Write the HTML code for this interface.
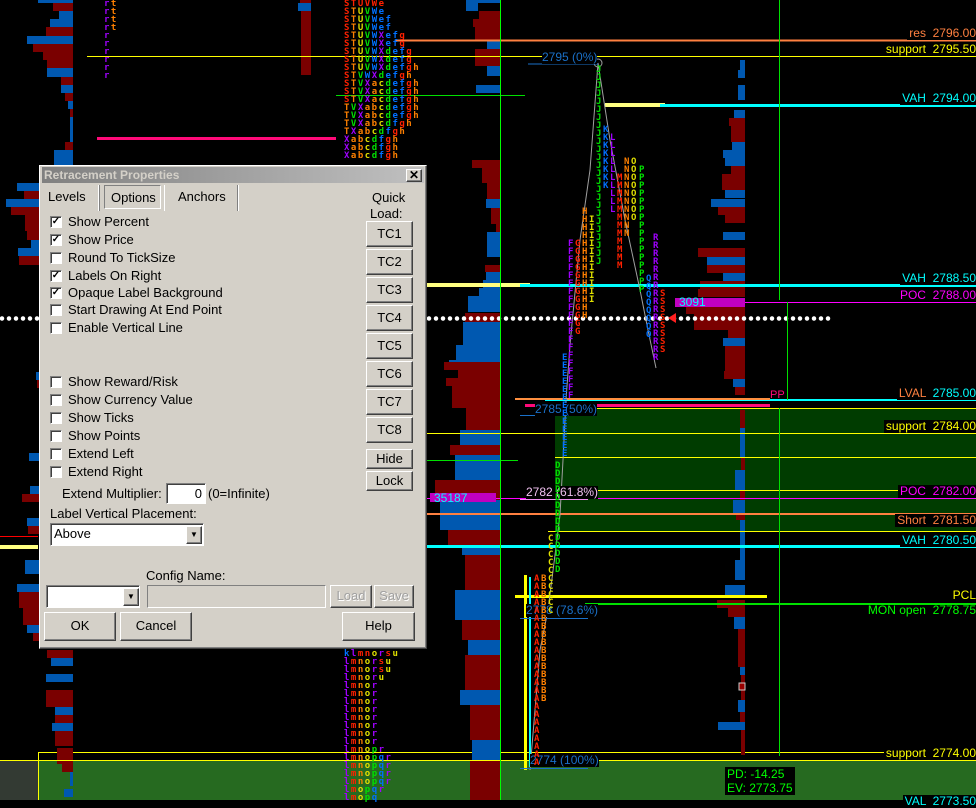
<!DOCTYPE html>
<html><head><meta charset="utf-8"><style>
*{margin:0;padding:0;box-sizing:border-box}
body{width:976px;height:800px;background:#000;position:relative;overflow:hidden;font-family:"Liberation Sans",sans-serif}
.a{position:absolute}
.lbl{position:absolute;right:0;font:12px "Liberation Sans",sans-serif;white-space:pre;line-height:13px;background:#000;padding-left:2px}
.col{position:absolute;width:7px;word-break:break-all;font:bold 9px "DejaVu Sans Mono",monospace;line-height:8px}
.tp{position:absolute;font:bold 9px "DejaVu Sans Mono",monospace;line-height:8px;white-space:pre;letter-spacing:1.5px}
.fib{position:absolute;font:12px "Liberation Sans",sans-serif;color:#1a70c8;background:#000;line-height:13px;white-space:pre}
#dlg{position:absolute;left:39px;top:165px;width:388px;height:484px;background:#d4d0c8;border:1px solid #fff;border-right-color:#404040;border-bottom-color:#404040;box-shadow:inset -1px -1px #808080;font-size:13px;color:#000}
#dlg .t{position:absolute;white-space:nowrap;line-height:15px}
.cb{position:absolute;left:10px;width:12px;height:12px;background:#fff;border:1px solid #808080;border-right-color:#fff;border-bottom-color:#fff;box-shadow:inset 1px 1px #404040;font-size:10px;line-height:10px;text-align:center;font-weight:bold}
.btn{position:absolute;background:#d4d0c8;border:1px solid #fff;border-right-color:#404040;border-bottom-color:#404040;box-shadow:inset -1px -1px #808080;text-align:center;font-size:13px}
.fld{position:absolute;background:#fff;border:1px solid #808080;border-right-color:#fff;border-bottom-color:#fff;box-shadow:inset 1px 1px #404040}
</style></head><body>

<div class="a" style="left:555px;top:408px;width:421px;height:123px;background:#003c00"></div>
<div class="a" style="left:38px;top:760px;width:938px;height:40px;background:#266a20"></div>
<div class="a" style="left:0;top:760px;width:38px;height:40px;background:#333a33"></div>
<div class="a" style="left:38px;top:752px;width:938px;height:48px;border:1px solid #ff0;border-right:none;border-bottom:none"></div>

<svg class="a" style="left:0;top:0" width="976" height="800">
<g fill="#0058b0">
<rect x="38" y="0" width="35" height="3"/><rect x="59" y="11" width="14" height="8"/><rect x="50" y="19" width="23" height="8"/><rect x="27" y="36" width="46" height="8"/><rect x="47" y="68" width="26" height="9"/><rect x="61" y="85" width="12" height="8"/><rect x="68" y="101" width="5" height="8"/><rect x="70" y="117" width="3" height="25"/><rect x="54" y="150" width="19" height="15"/>
<rect x="17" y="183" width="22" height="8"/><rect x="6" y="199" width="33" height="8"/><rect x="31" y="240" width="8" height="8"/><rect x="18" y="248" width="21" height="8"/><rect x="36" y="372" width="3" height="8"/><rect x="29" y="453" width="10" height="8"/><rect x="30" y="486" width="9" height="8"/><rect x="27" y="518" width="12" height="8"/><rect x="25" y="560" width="14" height="14"/><rect x="17" y="584" width="22" height="8"/><rect x="27" y="625" width="12" height="8"/>
<rect x="51" y="658" width="22" height="8"/><rect x="46" y="674" width="27" height="8"/><rect x="55" y="707" width="18" height="8"/><rect x="52" y="723" width="21" height="8"/><rect x="70" y="772" width="3" height="14"/><rect x="64" y="789" width="9" height="8"/>
<rect x="466" y="0" width="34" height="3"/><rect x="466" y="3" width="12" height="8"/><rect x="487" y="41" width="13" height="8"/><rect x="487" y="66" width="13" height="10"/><rect x="476" y="85" width="24" height="8"/><rect x="486" y="199" width="14" height="9"/><rect x="487" y="232" width="13" height="25"/><rect x="486" y="272" width="14" height="8"/><rect x="483" y="280" width="17" height="9"/><rect x="479" y="288" width="21" height="8"/><rect x="468" y="296" width="32" height="8"/><rect x="468" y="304" width="32" height="8"/><rect x="463" y="322" width="37" height="30"/><rect x="456" y="345" width="44" height="15"/><rect x="449" y="360" width="51" height="10"/>
<rect x="460" y="430" width="40" height="15"/><rect x="455" y="455" width="45" height="25"/><rect x="440" y="500" width="60" height="30"/><rect x="462" y="545" width="38" height="10"/><rect x="455" y="590" width="45" height="30"/><rect x="468" y="640" width="32" height="15"/><rect x="460" y="690" width="40" height="15"/><rect x="472" y="740" width="28" height="20"/>
<rect x="740" y="60" width="5" height="10"/><rect x="738" y="70" width="7" height="8"/><rect x="738" y="85" width="7" height="15"/><rect x="734" y="110" width="11" height="8"/><rect x="732" y="142" width="13" height="8"/><rect x="723" y="150" width="22" height="8"/><rect x="725" y="158" width="20" height="8"/><rect x="725" y="190" width="20" height="8"/><rect x="711" y="199" width="34" height="8"/><rect x="723" y="232" width="22" height="8"/><rect x="707" y="257" width="38" height="8"/><rect x="723" y="273" width="22" height="8"/><rect x="723" y="338" width="22" height="8"/><rect x="733" y="379" width="12" height="8"/><rect x="740" y="428" width="5" height="30"/><rect x="735" y="470" width="10" height="20"/><rect x="733" y="500" width="12" height="15"/><rect x="740" y="520" width="5" height="40"/><rect x="735" y="560" width="10" height="20"/><rect x="725" y="585" width="20" height="12"/><rect x="734" y="617" width="11" height="12"/><rect x="740" y="667" width="5" height="8"/><rect x="738" y="700" width="7" height="12"/><rect x="718" y="722" width="27" height="8"/>
</g>
<g fill="#7a0000">
<rect x="53" y="3" width="20" height="8"/><rect x="46" y="27" width="27" height="9"/><rect x="33" y="44" width="40" height="8"/><rect x="43" y="52" width="30" height="8"/><rect x="47" y="60" width="26" height="8"/><rect x="61" y="77" width="12" height="8"/><rect x="65" y="93" width="8" height="8"/><rect x="70" y="109" width="3" height="8"/><rect x="65" y="142" width="8" height="8"/>
<rect x="24" y="191" width="15" height="8"/><rect x="11" y="207" width="28" height="8"/><rect x="25" y="215" width="14" height="16"/><rect x="27" y="231" width="12" height="9"/><rect x="19" y="256" width="20" height="9"/><rect x="37" y="380" width="2" height="8"/><rect x="22" y="494" width="17" height="8"/><rect x="28" y="526" width="11" height="8"/><rect x="19" y="592" width="20" height="16"/><rect x="23" y="608" width="16" height="17"/><rect x="33" y="633" width="6" height="8"/>
<rect x="47" y="650" width="26" height="8"/><rect x="46" y="690" width="27" height="17"/><rect x="55" y="715" width="18" height="8"/><rect x="55" y="731" width="18" height="15"/><rect x="57" y="748" width="16" height="16"/><rect x="62" y="764" width="11" height="8"/>
<rect x="479" y="11" width="21" height="8"/><rect x="473" y="19" width="27" height="8"/><rect x="475" y="27" width="25" height="14"/><rect x="475" y="49" width="25" height="17"/><rect x="472" y="160" width="28" height="8"/><rect x="482" y="168" width="18" height="15"/><rect x="487" y="183" width="13" height="16"/><rect x="491" y="208" width="9" height="16"/><rect x="496" y="224" width="4" height="8"/><rect x="485" y="265" width="15" height="7"/><rect x="465" y="313" width="35" height="9"/><rect x="444" y="362" width="56" height="8"/><rect x="458" y="370" width="42" height="8"/><rect x="446" y="378" width="54" height="8"/><rect x="452" y="386" width="48" height="22"/><rect x="466" y="408" width="34" height="22"/><rect x="450" y="445" width="50" height="10"/><rect x="435" y="480" width="65" height="20"/><rect x="448" y="530" width="52" height="15"/><rect x="465" y="555" width="35" height="35"/><rect x="462" y="620" width="38" height="20"/><rect x="465" y="655" width="35" height="35"/><rect x="470" y="705" width="30" height="35"/><rect x="470" y="760" width="30" height="40"/>
<rect x="729" y="118" width="16" height="8"/><rect x="731" y="126" width="14" height="16"/><rect x="731" y="166" width="14" height="8"/><rect x="722" y="174" width="23" height="16"/><rect x="718" y="207" width="27" height="8"/><rect x="725" y="215" width="20" height="8"/><rect x="698" y="248" width="47" height="9"/><rect x="707" y="265" width="38" height="8"/><rect x="700" y="281" width="45" height="8"/><rect x="698" y="289" width="47" height="8"/><rect x="686" y="306" width="59" height="8"/><rect x="694" y="314" width="51" height="16"/><rect x="728" y="330" width="17" height="8"/><rect x="725" y="346" width="20" height="25"/><rect x="724" y="371" width="21" height="8"/><rect x="735" y="387" width="10" height="8"/><rect x="740" y="410" width="5" height="18"/><rect x="741" y="458" width="4" height="12"/><rect x="740" y="490" width="5" height="10"/><rect x="736" y="515" width="9" height="5"/><rect x="717" y="600" width="28" height="8"/><rect x="728" y="608" width="17" height="9"/><rect x="738" y="629" width="7" height="38"/><rect x="741" y="675" width="4" height="25"/><rect x="740" y="712" width="5" height="10"/><rect x="741" y="730" width="4" height="25"/>
</g>
<rect x="300" y="0" width="11" height="5" fill="#7a0000"/><rect x="298" y="3" width="13" height="8" fill="#0058b0"/><rect x="301" y="11" width="10" height="64" fill="#7a0000"/>
<rect x="97" y="137" width="239" height="3" fill="#ff0a78"/>
<line x1="395" y1="40.5" x2="976" y2="40.5" stroke="#ff8040" stroke-width="2"/>
<line x1="87" y1="56.5" x2="976" y2="56.5" stroke="#ffff00"/>
<line x1="336" y1="95.5" x2="525" y2="95.5" stroke="#00e000"/>
<rect x="605" y="103" width="60" height="4" fill="#ffff80"/><rect x="660" y="104" width="316" height="3" fill="#00ffff"/>
<rect x="426" y="283" width="104" height="4" fill="#ffff80"/><rect x="520" y="284" width="456" height="3" fill="#00ffff"/>
<line x1="675" y1="302.5" x2="976" y2="302.5" stroke="#ff00ff"/>
<rect x="675" y="298" width="70" height="9" fill="#c000c0"/>
<line x1="2" y1="318.5" x2="832" y2="318.5" stroke="#fff" stroke-width="4.5" stroke-dasharray="0,7" stroke-linecap="round"/>
<polygon points="668,318 676,313 676,323" fill="#ff2020"/>
<rect x="545" y="399" width="431" height="2" fill="#00ffff"/>
<rect x="515" y="398" width="255" height="2" fill="#ff9040"/>
<rect x="525" y="404" width="245" height="3" fill="#ff0a78"/>
<line x1="555" y1="408.5" x2="976" y2="408.5" stroke="#ffff00"/>
<line x1="426" y1="433.5" x2="976" y2="433.5" stroke="#ffff00"/>
<line x1="426" y1="460.5" x2="518" y2="460.5" stroke="#00e000"/>
<line x1="555" y1="457.5" x2="976" y2="457.5" stroke="#ffff00"/>
<line x1="555" y1="490.5" x2="976" y2="490.5" stroke="#ffff00"/>
<line x1="426" y1="498.5" x2="976" y2="498.5" stroke="#ff00ff"/>
<rect x="430" y="493" width="66" height="9" fill="#c000c0"/>
<rect x="426" y="513" width="550" height="2" fill="#ff8040"/>
<line x1="548" y1="531.5" x2="976" y2="531.5" stroke="#ffff00"/>
<rect x="0" y="536" width="38" height="1" fill="#ff0000"/>
<rect x="0" y="545" width="38" height="4" fill="#ffff80"/>
<rect x="426" y="545" width="550" height="3" fill="#00ffff"/>
<rect x="515" y="595" width="252" height="3" fill="#ffff00"/>
<rect x="585" y="603" width="391" height="2" fill="#00e000"/>
<line x1="0" y1="760.5" x2="976" y2="760.5" stroke="#ffff00"/>
<line x1="500.5" y1="0" x2="500.5" y2="800" stroke="#00ff00"/>
<line x1="779.5" y1="0" x2="779.5" y2="300" stroke="#00e000"/>
<line x1="779.5" y1="408" x2="779.5" y2="756" stroke="#00e000"/>
<line x1="787.5" y1="302" x2="787.5" y2="400" stroke="#00e000"/>
<rect x="524" y="575" width="3" height="195" fill="#ffff00"/><rect x="529" y="577" width="2" height="190" fill="#00ffff"/>
<polyline points="530,770 540,650 548,610 555,555 560,515 563,460 566,400 570,345 580,240 590,170 598,63 610,140 625,220 640,290 648,330 656,368" fill="none" stroke="#a0a0a0" stroke-width="1"/>
<circle cx="598" cy="63" r="4" fill="none" stroke="#a0a0a0"/>
<g stroke="#1a70c8" stroke-width="1">
<line x1="528" y1="64" x2="598" y2="64"/><line x1="520" y1="415.5" x2="588" y2="415.5"/><line x1="520" y1="768.5" x2="588" y2="768.5"/><line x1="520" y1="618.5" x2="588" y2="618.5"/>
</g><line x1="520" y1="499.5" x2="588" y2="499.5" stroke="#f090f0"/>
<rect x="739" y="683" width="6" height="7" fill="#900" stroke="#ccc"/>
</svg>

<div class="lbl" style="top:27px;color:#ff8040">res  2796.00</div>
<div class="lbl" style="top:43px;color:#ffff00">support  2795.50</div>
<div class="lbl" style="top:92px;color:#00ffff">VAH  2794.00</div>
<div class="lbl" style="top:272px;color:#00ffff">VAH  2788.50</div>
<div class="lbl" style="top:289px;color:#ff00ff">POC  2788.00</div>
<div class="lbl" style="top:387px;color:#00ffff"><span style="color:#ff8040">LVAL</span>  2785.00</div>
<div class="lbl" style="top:420px;color:#ffff00">support  2784.00</div>
<div class="lbl" style="top:485px;color:#ff00ff">POC  2782.00</div>
<div class="lbl" style="top:514px;color:#ff8040">Short  2781.50</div>
<div class="lbl" style="top:534px;color:#00ffff">VAH  2780.50</div>
<div class="lbl" style="top:589px;color:#ffff00;background:none">PCL</div>
<div class="lbl" style="top:604px;color:#00ff00;background:none">MON open  2778.75</div>
<div class="lbl" style="top:747px;color:#ffff00">support  2774.00</div>
<div class="lbl" style="top:795px;color:#00ffff">VAL  2773.50</div>
<div class="a" style="left:679px;top:296px;font:12px 'Liberation Sans',sans-serif;color:#00ffff;line-height:12px">3091</div>
<div class="a" style="left:434px;top:492px;font:12px 'Liberation Sans',sans-serif;color:#00ffff;line-height:12px">35187</div>
<div class="a" style="left:770px;top:390px;font:11px 'Liberation Sans',sans-serif;color:#ff0a78;line-height:11px">PP</div>
<div class="a" style="left:725px;top:767px;background:#000;font:12px 'Liberation Sans',sans-serif;color:#00ff00;line-height:14px;padding:0 2px">PD: -14.25<br>EV: 2773.75</div>

<div class="fib" style="left:542px;top:51px">2795 (0%)</div>
<div class="fib" style="left:535px;top:403px">2785 (50%)</div>
<div class="fib" style="left:526px;top:486px;color:#f0c0f0">2782 (61.8%)</div>
<div class="fib" style="left:526px;top:604px">2778 (78.6%)</div>
<div class="fib" style="left:530px;top:754px">2774 (100%)</div>

<div class="tp" style="left:104px;top:0"><span style="color:#a000ff">r</span><span style="color:#ff8000">t</span>
<span style="color:#a000ff">r</span><span style="color:#ff8000">t</span>
<span style="color:#a000ff">r</span><span style="color:#ff8000">t</span>
<span style="color:#a000ff">r</span><span style="color:#ff8000">t</span>
<span style="color:#a000ff">r
r
r
r
r
r</span></div>
<div class="tp" style="left:344px;top:0;color:#ff2000">STUVWe
S<b style="color:#ff8000">T</b><b style="color:#e0e000">U</b><b style="color:#00e000">V</b><b style="color:#0070ff">We</b>
S<b style="color:#ff8000">T</b><b style="color:#e0e000">U</b><b style="color:#00e000">V</b><b style="color:#0070ff">Wef</b>
S<b style="color:#ff8000">T</b><b style="color:#e0e000">U</b><b style="color:#00e000">V</b><b style="color:#0070ff">Wef</b>
S<b style="color:#ff8000">T</b><b style="color:#e0e000">U</b><b style="color:#00e000">V</b><b style="color:#0070ff">W</b><b style="color:#a000ff">X</b><b style="color:#0070ff">ef</b>g
S<b style="color:#ff8000">T</b><b style="color:#e0e000">U</b><b style="color:#00e000">V</b><b style="color:#0070ff">W</b><b style="color:#a000ff">X</b><b style="color:#0070ff">ef</b>g
S<b style="color:#ff8000">T</b><b style="color:#e0e000">U</b><b style="color:#00e000">V</b><b style="color:#0070ff">W</b><b style="color:#a000ff">X</b><b style="color:#00e000">d</b><b style="color:#0070ff">ef</b>g
S<b style="color:#ff8000">T</b><b style="color:#e0e000">U</b><b style="color:#00e000">V</b><b style="color:#0070ff">W</b><b style="color:#a000ff">X</b><b style="color:#00e000">d</b><b style="color:#0070ff">ef</b>g
S<b style="color:#ff8000">T</b><b style="color:#e0e000">U</b><b style="color:#00e000">V</b><b style="color:#0070ff">W</b><b style="color:#a000ff">X</b><b style="color:#00e000">d</b><b style="color:#0070ff">ef</b>g<b style="color:#ff8000">h</b>
S<b style="color:#ff8000">T</b><b style="color:#00e000">V</b><b style="color:#0070ff">W</b><b style="color:#a000ff">X</b><b style="color:#00e000">d</b><b style="color:#0070ff">ef</b>g<b style="color:#ff8000">h</b>
S<b style="color:#ff8000">T</b><b style="color:#00e000">V</b><b style="color:#a000ff">X</b><b style="color:#ff8000">a</b><b style="color:#e0e000">c</b><b style="color:#00e000">d</b><b style="color:#0070ff">ef</b>g<b style="color:#ff8000">h</b>
S<b style="color:#ff8000">T</b><b style="color:#00e000">V</b><b style="color:#a000ff">X</b><b style="color:#ff8000">a</b><b style="color:#e0e000">c</b><b style="color:#00e000">d</b><b style="color:#0070ff">ef</b>g<b style="color:#ff8000">h</b>
S<b style="color:#ff8000">T</b><b style="color:#00e000">V</b><b style="color:#a000ff">X</b><b style="color:#ff8000">a</b><b style="color:#e0e000">c</b><b style="color:#00e000">d</b><b style="color:#0070ff">ef</b>g<b style="color:#ff8000">h</b>
<b style="color:#ff8000">T</b><b style="color:#00e000">V</b><b style="color:#a000ff">X</b><b style="color:#ff8000">ab</b><b style="color:#e0e000">c</b><b style="color:#00e000">d</b><b style="color:#0070ff">ef</b>g<b style="color:#ff8000">h</b>
<b style="color:#ff8000">T</b><b style="color:#00e000">V</b><b style="color:#a000ff">X</b><b style="color:#ff8000">ab</b><b style="color:#e0e000">c</b><b style="color:#00e000">d</b><b style="color:#0070ff">ef</b>g<b style="color:#ff8000">h</b>
<b style="color:#ff8000">T</b><b style="color:#00e000">V</b><b style="color:#a000ff">X</b><b style="color:#ff8000">ab</b><b style="color:#e0e000">c</b><b style="color:#00e000">d</b><b style="color:#0070ff">f</b>g<b style="color:#ff8000">h</b>
<b style="color:#ff8000">T</b><b style="color:#a000ff">X</b><b style="color:#ff8000">ab</b><b style="color:#e0e000">c</b><b style="color:#00e000">d</b><b style="color:#0070ff">f</b>g<b style="color:#ff8000">h</b>
<b style="color:#a000ff">X</b><b style="color:#ff8000">ab</b><b style="color:#e0e000">c</b><b style="color:#00e000">d</b><b style="color:#0070ff">f</b>g<b style="color:#ff8000">h</b>
<b style="color:#a000ff">X</b><b style="color:#ff8000">ab</b><b style="color:#e0e000">c</b><b style="color:#00e000">d</b><b style="color:#0070ff">f</b>g<b style="color:#ff8000">h</b>
<b style="color:#a000ff">X</b><b style="color:#ff8000">ab</b><b style="color:#e0e000">c</b><b style="color:#00e000">d</b><b style="color:#0070ff">f</b>g<b style="color:#ff8000">h</b></div>
<div class="tp" style="left:344px;top:650px;color:#ff2000"><b style="color:#0070ff">k</b><b style="color:#a000ff">l</b>mn<b style="color:#e0e000">o</b><b style="color:#a000ff">r</b>s<b style="color:#e0e000">u</b>
<b style="color:#a000ff">l</b>m<b style="color:#ff8000">n</b><b style="color:#e0e000">o</b><b style="color:#a000ff">r</b>s<b style="color:#e0e000">u</b>
<b style="color:#a000ff">l</b>m<b style="color:#ff8000">n</b><b style="color:#e0e000">o</b><b style="color:#a000ff">r</b>s<b style="color:#e0e000">u</b>
<b style="color:#a000ff">l</b>m<b style="color:#ff8000">n</b><b style="color:#e0e000">o</b><b style="color:#a000ff">r</b><b style="color:#e0e000">u</b>
<b style="color:#a000ff">l</b>m<b style="color:#ff8000">n</b><b style="color:#e0e000">o</b><b style="color:#a000ff">r</b>
<b style="color:#a000ff">l</b>m<b style="color:#ff8000">n</b><b style="color:#e0e000">o</b><b style="color:#a000ff">r</b>
<b style="color:#a000ff">l</b>m<b style="color:#ff8000">n</b><b style="color:#e0e000">o</b><b style="color:#a000ff">r</b>
<b style="color:#a000ff">l</b>m<b style="color:#ff8000">n</b><b style="color:#e0e000">o</b><b style="color:#a000ff">r</b>
<b style="color:#a000ff">l</b>m<b style="color:#ff8000">n</b><b style="color:#e0e000">o</b><b style="color:#a000ff">r</b>
<b style="color:#a000ff">l</b>m<b style="color:#ff8000">n</b><b style="color:#e0e000">o</b><b style="color:#a000ff">r</b>
<b style="color:#a000ff">l</b>m<b style="color:#ff8000">n</b><b style="color:#e0e000">o</b><b style="color:#a000ff">r</b>
<b style="color:#a000ff">l</b>m<b style="color:#ff8000">n</b><b style="color:#e0e000">o</b><b style="color:#a000ff">r</b>
<b style="color:#a000ff">l</b>m<b style="color:#ff8000">n</b><b style="color:#e0e000">o</b><b style="color:#00e000">p</b><b style="color:#a000ff">r</b>
<b style="color:#a000ff">l</b>m<b style="color:#ff8000">n</b><b style="color:#e0e000">o</b><b style="color:#00e000">p</b><b style="color:#0070ff">q</b><b style="color:#a000ff">r</b>
<b style="color:#a000ff">l</b>m<b style="color:#ff8000">n</b><b style="color:#e0e000">o</b><b style="color:#00e000">p</b><b style="color:#0070ff">q</b><b style="color:#a000ff">r</b>
<b style="color:#a000ff">l</b>m<b style="color:#ff8000">n</b><b style="color:#e0e000">o</b><b style="color:#00e000">p</b><b style="color:#0070ff">q</b><b style="color:#a000ff">r</b>
<b style="color:#a000ff">l</b>m<b style="color:#ff8000">n</b><b style="color:#e0e000">o</b><b style="color:#00e000">p</b><b style="color:#0070ff">q</b><b style="color:#a000ff">r</b>
<b style="color:#a000ff">l</b>m<b style="color:#e0e000">o</b><b style="color:#00e000">p</b><b style="color:#0070ff">q</b><b style="color:#a000ff">r</b>
<b style="color:#a000ff">l</b>m<b style="color:#e0e000">o</b><b style="color:#00e000">p</b><b style="color:#0070ff">q</b></div>

<div class="col" style="left:596px;top:66px;color:#00e000">JJJJJJJJJJJJJJJJJJJJJJJJJ</div>
<div class="col" style="left:603px;top:126px;color:#0070ff">KKKKKKKK</div>
<div class="col" style="left:610px;top:134px;color:#a000ff">LLLLLLLLLL</div>
<div class="col" style="left:617px;top:174px;color:#ff2000">MMMMMMMMMMMM</div>
<div class="col" style="left:624px;top:158px;color:#ff8000">NNNNNNNNNN</div>
<div class="col" style="left:631px;top:158px;color:#e0e000">OOOOOOOO</div>
<div class="col" style="left:639px;top:166px;color:#00e000">PPPPPPPPPPPPPPPP</div>
<div class="col" style="left:646px;top:275px;color:#0070ff">QQQQQQQQ</div>
<div class="col" style="left:653px;top:234px;color:#a000ff">RRRRRRRRRRRRRRRR</div>
<div class="col" style="left:660px;top:290px;color:#ff2000">SSSSSSSS</div>
<div class="col" style="left:568px;top:240px;color:#a000ff">FFFFFFFFFFFFFFFFFFFF</div>
<div class="col" style="left:575px;top:240px;color:#ff2000">GGGGGGGGGGGG</div>
<div class="col" style="left:582px;top:208px;color:#ff8000">HHHHHHHHHHHHHH</div>
<div class="col" style="left:589px;top:216px;color:#e0e000">IIIIIIIIIII</div>
<div class="col" style="left:562px;top:354px;color:#0070ff">EEEEEEEEEEEEE</div>
<div class="col" style="left:555px;top:462px;color:#00e000">DDDDDDDDDDDDDD</div>
<div class="col" style="left:548px;top:535px;color:#e0e000">CCCCCCCCCC</div>
<div class="col" style="left:541px;top:575px;color:#ff8000">BBBBBBBBBBBBBBBB</div>
<div class="col" style="left:534px;top:575px;color:#ff2000">AAAAAAAAAAAAAAAAAAAAAAAA</div>

<div id="dlg">
<div class="a" style="left:2px;top:1px;width:382px;height:16px;background:linear-gradient(90deg,#808080,#c0c0c0)"></div>
<div class="t" style="left:4px;top:2px;color:#d4d0c8;font-weight:bold;font-size:12px">Retracement Properties</div>
<div class="btn" style="left:366px;top:3px;width:16px;height:13px;font-size:12px;line-height:10px;font-weight:bold">✕</div>
<div class="t" style="left:8px;top:23px">Levels</div>
<div class="a" style="left:58px;top:19px;width:1px;height:26px;background:#fff;box-shadow:1px 0 #808080"></div>
<div class="a" style="left:64px;top:19px;width:57px;height:24px;border:1px solid #808080;border-right-color:#fff;border-bottom-color:#fff"></div>
<div class="t" style="left:71px;top:24px">Options</div>
<div class="a" style="left:124px;top:19px;width:1px;height:26px;background:#fff"></div>
<div class="t" style="left:138px;top:23px">Anchors</div>
<div class="a" style="left:197px;top:19px;width:1px;height:26px;background:#808080;box-shadow:1px 0 #fff"></div>

<div class="cb" style="top:50px">✓</div><div class="t" style="left:28px;top:48px">Show Percent</div>
<div class="cb" style="top:68px">✓</div><div class="t" style="left:28px;top:66px">Show Price</div>
<div class="cb" style="top:86px"></div><div class="t" style="left:28px;top:84px">Round To TickSize</div>
<div class="cb" style="top:104px">✓</div><div class="t" style="left:28px;top:102px">Labels On Right</div>
<div class="cb" style="top:121px">✓</div><div class="t" style="left:28px;top:119px">Opaque Label Background</div>
<div class="cb" style="top:138px"></div><div class="t" style="left:28px;top:136px">Start Drawing At End Point</div>
<div class="cb" style="top:156px"></div><div class="t" style="left:28px;top:154px">Enable Vertical Line</div>
<div class="cb" style="top:210px"></div><div class="t" style="left:28px;top:208px">Show Reward/Risk</div>
<div class="cb" style="top:228px"></div><div class="t" style="left:28px;top:226px">Show Currency Value</div>
<div class="cb" style="top:246px"></div><div class="t" style="left:28px;top:244px">Show Ticks</div>
<div class="cb" style="top:264px"></div><div class="t" style="left:28px;top:262px">Show Points</div>
<div class="cb" style="top:282px"></div><div class="t" style="left:28px;top:280px">Extend Left</div>
<div class="cb" style="top:300px"></div><div class="t" style="left:28px;top:298px">Extend Right</div>
<div class="t" style="left:22px;top:320px">Extend Multiplier:</div>
<div class="fld" style="left:126px;top:317px;width:40px;height:21px;text-align:right;padding-right:3px;line-height:19px">0</div>
<div class="t" style="left:168px;top:320px">(0=Infinite)</div>
<div class="t" style="left:10px;top:340px">Label Vertical Placement:</div>
<div class="fld" style="left:10px;top:357px;width:154px;height:23px;padding-left:3px;line-height:20px">Above</div>
<div class="btn" style="left:146px;top:360px;width:16px;height:18px;font-size:8px;line-height:16px">▼</div>
<div class="t" style="left:106px;top:402px">Config Name:</div>
<div class="fld" style="left:6px;top:419px;width:94px;height:23px"></div>
<div class="btn" style="left:83px;top:422px;width:16px;height:18px;font-size:8px;line-height:16px">▼</div>
<div class="a" style="left:107px;top:419px;width:179px;height:23px;border:1px solid #808080;border-right-color:#fff;border-bottom-color:#fff"></div>
<div class="btn" style="left:290px;top:419px;width:42px;height:23px;line-height:20px;color:#a0a0a0;text-shadow:1px 1px #fff">Load</div>
<div class="btn" style="left:334px;top:419px;width:40px;height:23px;line-height:20px;color:#a0a0a0;text-shadow:1px 1px #fff">Save</div>
<div class="btn" style="left:4px;top:446px;width:72px;height:29px;line-height:26px">OK</div>
<div class="btn" style="left:80px;top:446px;width:72px;height:29px;line-height:26px">Cancel</div>
<div class="btn" style="left:302px;top:446px;width:73px;height:29px;line-height:26px">Help</div>
<div class="t" style="left:332px;top:24px">Quick</div>
<div class="t" style="left:330px;top:40px">Load:</div>
<div class="btn" style="left:326px;top:55px;width:47px;height:26px;line-height:23px">TC1</div>
<div class="btn" style="left:326px;top:83px;width:47px;height:26px;line-height:23px">TC2</div>
<div class="btn" style="left:326px;top:111px;width:47px;height:26px;line-height:23px">TC3</div>
<div class="btn" style="left:326px;top:139px;width:47px;height:26px;line-height:23px">TC4</div>
<div class="btn" style="left:326px;top:167px;width:47px;height:26px;line-height:23px">TC5</div>
<div class="btn" style="left:326px;top:195px;width:47px;height:26px;line-height:23px">TC6</div>
<div class="btn" style="left:326px;top:223px;width:47px;height:26px;line-height:23px">TC7</div>
<div class="btn" style="left:326px;top:251px;width:47px;height:26px;line-height:23px">TC8</div>
<div class="btn" style="left:326px;top:283px;width:47px;height:20px;line-height:17px">Hide</div>
<div class="btn" style="left:326px;top:305px;width:47px;height:20px;line-height:17px">Lock</div>
</div>
</body></html>
